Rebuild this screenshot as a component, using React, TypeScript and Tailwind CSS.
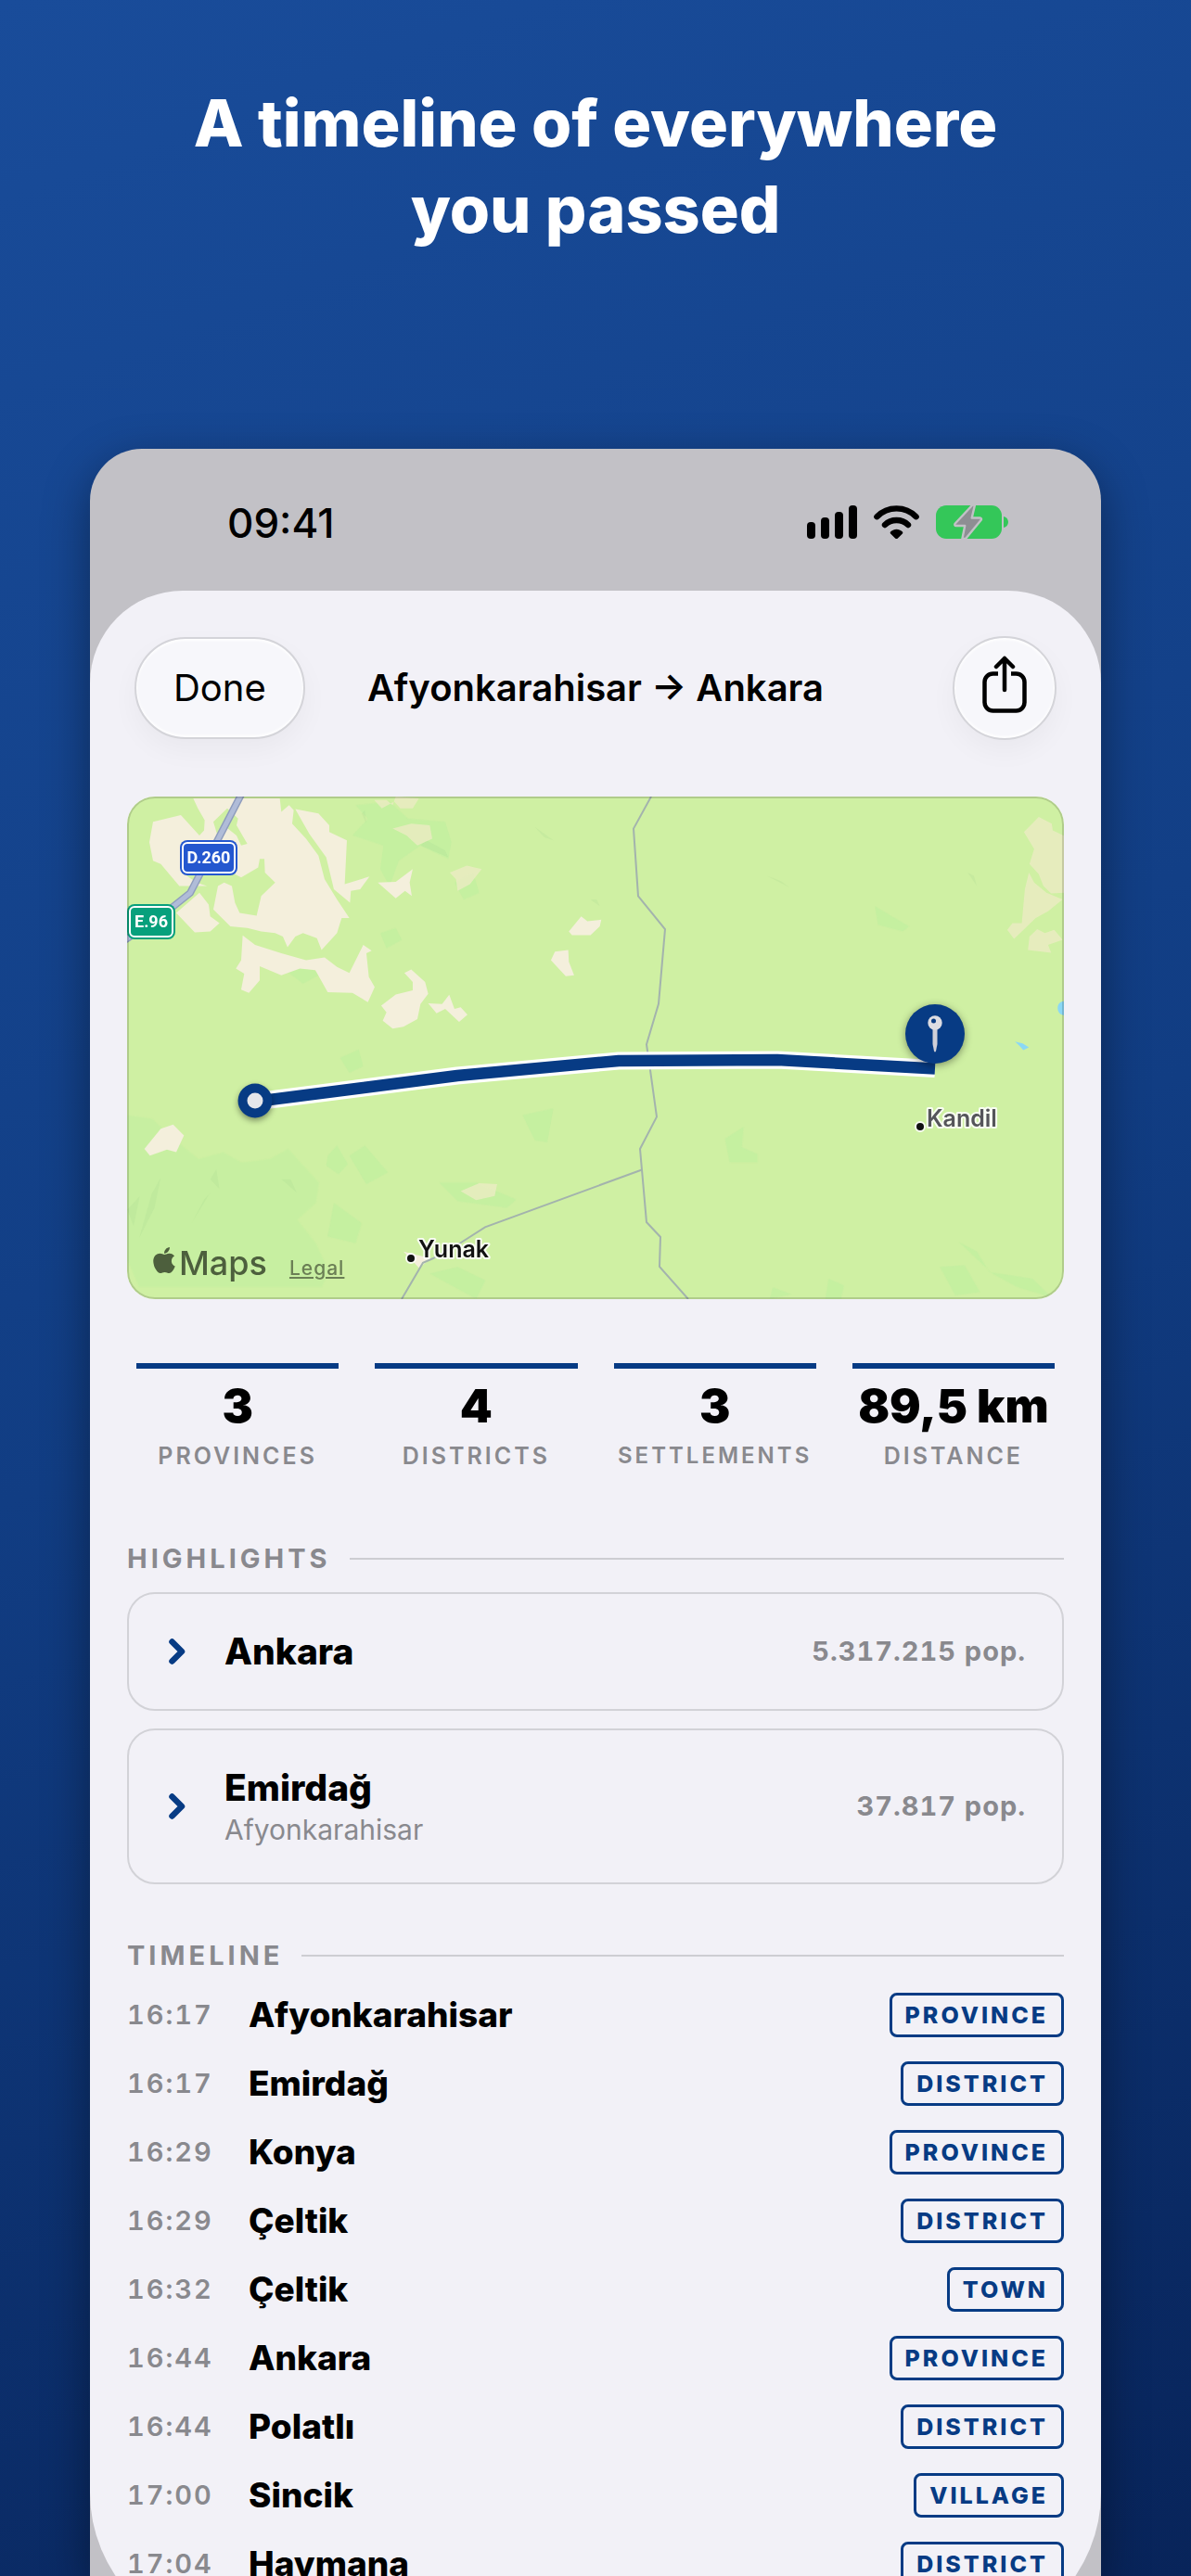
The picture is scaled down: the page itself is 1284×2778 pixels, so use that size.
import React from 'react'
import clsx from 'clsx'
import { FaApple } from 'react-icons/fa'

const stats = [
  { value: '3', label: 'Provinces' },
  { value: '4', label: 'Districts' },
  { value: '3', label: 'Settlements' },
  { value: '89,5 km', label: 'Distance' },
]

const highlights = [
  { name: 'Ankara', region: '', population: '5.317.215 pop.' },
  { name: 'Emirdağ', region: 'Afyonkarahisar', population: '37.817 pop.' },
]

const timeline = [
  { time: '16:17', name: 'Afyonkarahisar', kind: 'Province' },
  { time: '16:17', name: 'Emirdağ', kind: 'District' },
  { time: '16:29', name: 'Konya', kind: 'Province' },
  { time: '16:29', name: 'Çeltik', kind: 'District' },
  { time: '16:32', name: 'Çeltik', kind: 'Town' },
  { time: '16:44', name: 'Ankara', kind: 'Province' },
  { time: '16:44', name: 'Polatlı', kind: 'District' },
  { time: '17:00', name: 'Sincik', kind: 'Village' },
  { time: '17:04', name: 'Haymana', kind: 'District' },
]

function SignalIcon() {
  return (
    <svg width="54" height="36" viewBox="0 0 54 36" aria-hidden="true">
      <rect x="0" y="18" width="9" height="18" rx="4" />
      <rect x="15" y="13" width="9" height="23" rx="4" />
      <rect x="30" y="7" width="9" height="29" rx="4" />
      <rect x="45" y="0" width="9" height="36" rx="4" />
    </svg>
  )
}

function WifiIcon() {
  return (
    <svg width="49" height="36" viewBox="0 0 49 36" aria-hidden="true">
      <g fill="none" stroke="#000" strokeWidth="6.4" strokeLinecap="round">
        <path d="M3.4 12.2C15 .4 34 .4 45.6 12.2" />
        <path d="M12 21c6.8-6.6 18.200-6.600 25 0" />
      </g>
      <path d="M18.300 28.200c3.500-3.400 8.900-3.400 12.400 0 .8.8.8 1.700 0 2.500l-4.800 4.700c-.9.8-1.900.8-2.800 0l-4.800-4.700c-.8-.8-.8-1.700 0-2.500z" />
    </svg>
  )
}

function BatteryIcon() {
  return (
    <svg width="78" height="36" viewBox="0 0 78 36" aria-hidden="true">
      <rect width="71" height="36" rx="11" fill="#34c759" />
      <path d="M73 12c3 .6 5 3 5 6s-2 5.400-5 6z" fill="#34c759" />
      <path
        d="M39.500-.5 20.800 19.500c-1 1.200-.4 2.500 1 2.500h9.400L28.400 36h3.600L48.500 16c1-1.200.3-2.500-1-2.500h-8.800L42-.5z"
        fill="#8e8e93"
        stroke="#c2c1c6"
        strokeWidth="2.400"
        strokeLinejoin="round"
      />
    </svg>
  )
}

function ShareIcon() {
  return (
    <svg
      width="48"
      height="62"
      viewBox="0 0 48 62"
      fill="none"
      stroke="#000"
      strokeWidth="4.500"
      strokeLinecap="round"
      strokeLinejoin="round"
      aria-hidden="true"
    >
      <path
        d="M17 19.500H11.500a9 9 0 0 0-9 9v22a9 9 0 0 0 9 9h25a9 9 0 0 0 9-9v-22a9 9 0 0 0-9-9H31"
        strokeLinecap="butt"
      />
      <path d="M24 37V3M15 12l9-9 9 9" />
    </svg>
  )
}

function ChevronIcon() {
  return (
    <svg width="18" height="28" viewBox="0 0 18 28" aria-hidden="true">
      <path
        d="M3.500 3.500L14 14 3.500 24.500"
        fill="none"
        stroke="#073b84"
        strokeWidth="6.500"
        strokeLinecap="round"
        strokeLinejoin="round"
      />
    </svg>
  )
}

function StatusBar() {
  return (
    <div className="flex items-start justify-between pt-[50px] pr-[100px] pb-[43px] pl-[148px]">
      <time className="text-[44px] leading-[60px] font-medium">09:41</time>
      <div className="flex items-center gap-[18px] pt-[11px]">
        <SignalIcon />
        <WifiIcon />
        <BatteryIcon />
      </div>
    </div>
  )
}

function SheetHeader() {
  return (
    <header className="grid grid-cols-[1fr_auto_1fr] items-center px-12">
      <button
        type="button"
        className="h-[110px] justify-self-start rounded-full border-2 border-[#d4d4d9] bg-[#f7f7fb] px-10 text-[40px] shadow-[0_12px_30px_rgba(0,0,0,0.04),inset_0_2px_3px_#fff,inset_0_-2px_3px_#fff]"
      >
        Done
      </button>
      <h2 className="text-[40px] font-semibold">Afyonkarahisar → Ankara</h2>
      <button
        type="button"
        aria-label="Share"
        className="flex size-28 items-center justify-center justify-self-end rounded-full border-2 border-[#d4d4d9] bg-[#f7f7fb] pb-2 shadow-[0_12px_30px_rgba(0,0,0,0.04),inset_0_2px_3px_#fff,inset_0_-2px_3px_#fff]"
      >
        <ShareIcon />
      </button>
    </header>
  )
}

function RouteMap() {
  return (
    <div className="relative overflow-hidden rounded-[30px] bg-[#cff0a3] after:pointer-events-none after:absolute after:inset-0 after:rounded-[30px] after:border-2 after:border-black/15">
      <svg viewBox="0 0 1010 542" className="block w-full" role="img" aria-label="Route map">
        <g transform="translate(-7 -9) scale(.3333 .3635)">
          {/* vegetation */}
          <g fill="#c0efa0" opacity=".7">
            <path d="M760 50L870 40 930 90 1050 100 1070 160 1060 210 970 170 900 215 870 290 840 240 850 170 750 140 800 90z" />
            <path d="M1080 280l60-30 20 60-50 20z" />
            <path d="M840 430l50-15 20 35-50 25z" />
            <path d="M540 545l60-15 50 20-60 30z" />
            <path d="M710 800l60-25 15 50-45 20z" />
            <path d="M670 1090l30-30 35 55-30 30-40-25z" />
            <path d="M740 1090l50-30 75 80-70 35z" />
            <path d="M1300 970l100-20-20 100-40-5z" />
            <path d="M1030 1170h120l130 50-30 25-160-20z" />
            <path d="M22 970l80 10 70 60 80 60 80-20 60 30 90-10 60-30 40 40 60 60-10 60-60 50 60 70 40 80-20 50H60L22 1400z" opacity=".7" />
            <path d="M690 1230l90 60-20 60-90-20z" />
            <path d="M1000 1440l90-20 90 40-30 55z" />
            <path d="M2440 350l110 60-20 15-80-20z" />
            <path d="M1955 1040l60-35-5 60 50 20 0 25-90 0z" />
            <path d="M2100 1516l10-35 60 20zM2290 1455l50 20-10 40h-50zM2650 1420l80-5 50 80-80 10zM2710 1345l60 30 40 60 140 20 60 55-110-30-80-40z" />
          </g>
          {/* terrain shading */}
          <g fill="#93c98a" opacity=".14">
            <path d="M60 1335l40-130 30-50-20 90zM230 1290l60-90-20 20zM290 1160l20-30 10 60zM520 1160l50 40-20-40z" />
            <path d="M970 170l90 35-10-20-60-30zM1340 115l60 40-30-10zM780 75l15 30-5-40z" />
            <path d="M2090 260l75 35-30-20zM1520 330l30 20-10-20zM2740 250l30 40-10-30z" />
            <path d="M22 1250l40-40-20 90z" />
          </g>
          {/* bare ground */}
          <g fill="#f4efdc">
            <path d="M235 30H515L520 70 545 50 560 65 555 105 600 150 640 200 660 270 700 330 740 385 715 385 700 430 650 480 635 445 590 430 565 440 540 472 525 440 500 430 455 425 410 415 355 410 300 360 315 290 335 280 360 290 370 340 385 370 440 378 455 320 500 280 467 250 465 210 450 210 445 235 390 265 360 250H200L245 280 280 290 190 290 130 225 105 215 93 160 105 100 195 80 255 140 270 125 272 95 250 60z" />
            <path d="M300 100L345 60 380 90 375 110 410 165 390 170 375 140 345 118 315 145z" fill="#cff0a3" />
            <path d="M180 370L255 310 285 345 290 380 320 400 290 425 240 428z" />
            <path d="M565 62L640 75 675 110 675 130 732 155 725 285 805 262 775 300 745 305 742 340 690 300 665 205 610 135z" />
            <path d="M395 437L435 465 520 490 600 510 660 502 700 530 740 548 785 465 812 482 795 490 803 560 822 590 800 635 750 607 670 605 630 540 580 535 520 555 450 528 450 570 415 607 390 598 400 550 373 535 390 510z" />
            <path d="M832 280L890 278 945 240 935 280 942 320 920 305 890 327z" />
            <path d="M918 548L940 538 985 575 995 610 970 640 960 685 915 708 880 713 848 690 860 665 843 645 890 612 945 600 945 575z" />
            <path d="M995 638L1040 640 1063 613 1080 655 1100 650 1122 672 1095 693 1050 655 1022 668z" />
            <path d="M1450 425L1490 380 1510 395 1555 390 1550 410 1520 436 1460 436z" />
            <path d="M1392 510L1405 485 1448 480 1450 515 1467 555 1440 558z" />
            <path d="M77 1070L130 1010 170 998 205 1030 180 1080 150 1072 95 1090z" />
            <path d="M915 1375l45 10 45 10-40 28-20-20z" />
          </g>
          <g fill="#eaecc2" opacity=".85">
            <path d="M820 35l40 0 20 15 10-25 75 5-20 30-40 0-20-20-40 20z" />
            <path d="M880 120L940 105 1000 110 1008 150 960 170 925 140z" />
            <path d="M1065 250L1120 230 1168 240 1130 285 1090 305 1085 270z" />
            <path d="M1100 1195L1160 1172 1218 1175 1210 1210 1150 1222z" />
            <path d="M2922 130L2970 85 3012 105 3015 125 3060 145V310L3010 312 2985 290 2970 255 2940 225 2955 180z" />
            <path d="M2938 250L2955 280 2995 310 3047 330 3000 365 2960 385 2915 425 2890 447 2868 420 2885 400 2915 400 2925 300z" />
            <path d="M2940 440L2965 418 2990 430 3020 420 3047 450 3000 465 3010 488 2935 480z" />
          </g>
          <g fill="#8bd8f5">
            <path d="M3052 632c-28 0-28 40 0 42z" />
            <path d="M2893 752l25 5 20 12-18 8-12-12z" />
          </g>
        </g>

        {/* district borders */}
        <g fill="none" stroke="#a3b3ad" strokeWidth="2">
          <path d="M565 0L546 34.600 551 107.300 580 143 573 223.600 560 267.300 564 295 571 345.400 553 380 555 402.500 560 459 575 475 574 507 605 542" />
          <path d="M555 402.500L386 464.300 360 481 330 498 319 502.800 296 542" />
        </g>

        {/* highway */}
        <g fill="none" strokeLinejoin="round">
          <path d="M124 -4L68 104 48 120 -4 156" stroke="#8f9dbd" strokeWidth="8" />
          <path d="M124 -4L68 104 48 120 -4 156" stroke="#b0bcd8" strokeWidth="5" />
        </g>
        <g fontFamily="Roboto, sans-serif" fontSize="18" fontWeight="700" fill="#fff" textAnchor="middle">
          <rect x="57" y="47" width="62" height="38" rx="8" fill="#2457cf" />
          <rect x="60" y="50" width="56" height="32" rx="5" fill="none" stroke="#fff" strokeWidth="2" />
          <text x="88" y="72">D.260</text>
          <rect x="0" y="116" width="52" height="38" rx="8" fill="#07a07c" />
          <rect x="3" y="119" width="46" height="32" rx="5" fill="none" stroke="#fff" strokeWidth="2" />
          <text x="26" y="141">E.96</text>
        </g>

        {/* route */}
        <g fill="none" strokeLinejoin="round">
          <path d="M138 329L356 301 530 285 701 284 871 293.500" stroke="#fff" strokeWidth="19" />
          <path d="M138 329L356 301 530 285 701 284 871 293.500" stroke="#073b84" strokeWidth="12.500" />
        </g>
        <circle cx="138" cy="328" r="18.500" fill="#073b84" className="drop-shadow-[0_3px_3px_rgba(0,0,0,0.4)]" />
        <circle cx="138" cy="328" r="8.500" fill="#e6e6ea" />
        <circle cx="871" cy="256" r="32" fill="#073b84" className="drop-shadow-[0_2px_4px_rgba(0,0,0,0.4)]" />
        <path d="M868.500 249h5v18l-1.500 7.500q-1 2-2 0l-1.500-7.500z" fill="#cfcfd8" />
        <circle cx="871" cy="244" r="7.700" fill="#dcdce2" />
        <circle cx="869.500" cy="242" r="2.500" fill="#073b84" />

        {/* places */}
        <g
          fontFamily="Inter, sans-serif"
          fontSize="25"
          fontWeight="600"
          stroke="#fff"
          strokeOpacity=".85"
          strokeWidth="4"
          strokeLinejoin="round"
          paintOrder="stroke"
        >
          <circle cx="306" cy="498" r="4" fill="#111" />
          <text x="314" y="497" fill="#111">Yunak</text>
          <circle cx="855" cy="356" r="4" fill="#111" />
          <text x="862" y="356" fill="#55555a">Kandil</text>
        </g>
      </svg>
      <div className="absolute bottom-[18px] left-6 flex items-baseline text-[#4d5f3d]">
        <FaApple className="size-8" aria-hidden="true" />
        <span className="text-4xl font-medium">Maps</span>
        <a href="#legal" className="ml-6 text-[21px] font-medium tracking-[1px] text-[#6b7f55] underline">
          Legal
        </a>
      </div>
    </div>
  )
}

function SectionTitle({ text }: { text: string }) {
  return (
    <div className="flex items-center gap-5">
      <h3 className="text-[29px] leading-9 font-bold tracking-[4px] text-[#89898e] uppercase">{text}</h3>
      <div className="h-[2px] grow bg-[#cdcdd2]" />
    </div>
  )
}

export default function App() {
  return (
    <main className="flex h-screen flex-col overflow-hidden bg-linear-160 from-[#194c9a] via-[#113d83] to-[#08245a] font-['Inter',sans-serif]">
      <h1 className="pt-[86px] text-center text-[70px] leading-[93px] font-extrabold text-white">
        A timeline of everywhere
        <br />
        you passed
      </h1>

      <div className="mx-[97px] mt-[212px] min-h-0 flex-1 overflow-hidden rounded-t-[56px] bg-[#c2c1c6] text-black shadow-[0_16px_50px_rgba(0,0,0,0.4)]">
        <StatusBar />

        <div className="rounded-t-[100px] rounded-b-[160px] bg-[#f2f1f7] pt-[49px] pb-[46px]">
          <SheetHeader />

          <div className="px-10 pt-[61px]">
            <RouteMap />

            <dl className="mt-[69px] grid grid-cols-4 gap-[39px] px-[10px]">
              {stats.map((stat) => (
                <div key={stat.label} className="flex flex-col-reverse border-t-[6px] border-[#073b84] text-center">
                  <dt
                    className={clsx(
                      'mt-2 leading-8 font-semibold tracking-[3px] text-[#89898e] uppercase',
                      stat.label.length > 10 ? 'text-2xl' : 'text-[25px]',
                    )}
                  >
                    {stat.label}
                  </dt>
                  <dd className="mt-[10px] text-[50px] leading-[60px] font-black whitespace-nowrap">{stat.value}</dd>
                </div>
              ))}
            </dl>

            <section className="mt-[77px]">
              <SectionTitle text="Highlights" />
              <ul className="mt-[18px] flex flex-col gap-[19px]">
                {highlights.map((place) => (
                  <li
                    key={place.name}
                    className="flex items-center rounded-[30px] border-2 border-[#d2d2d7] py-[37px] pr-[39px] pl-[43px]"
                  >
                    <ChevronIcon />
                    <div className="ml-[42px] grow">
                      <p className="text-[39px] leading-[50px] font-extrabold">{place.name}</p>
                      {place.region && (
                        <p className="text-[30px] leading-10 text-[#89898e]">{place.region}</p>
                      )}
                    </div>
                    <p className="text-[29px] font-bold tracking-[1px] text-[#89898e] tabular-nums">
                      {place.population}
                    </p>
                  </li>
                ))}
              </ul>
            </section>

            <section className="mt-[59px]">
              <SectionTitle text="Timeline" />
              <ol className="mt-[9px]">
                {timeline.map((entry) => (
                  <li key={entry.time + entry.name + entry.kind} className="flex h-[74px] items-center">
                    <time className="w-[131px] text-[29px] font-semibold tracking-[2px] text-[#89898e] tabular-nums">
                      {entry.time}
                    </time>
                    <p className="grow text-[37px] font-extrabold">{entry.name}</p>
                    <span className="rounded-lg border-[3px] border-[#073b84] px-[14px] text-[25px] leading-[42px] font-extrabold tracking-[3px] text-[#073b84] uppercase">
                      {entry.kind}
                    </span>
                  </li>
                ))}
              </ol>
            </section>
          </div>
        </div>
      </div>
    </main>
  )
}
